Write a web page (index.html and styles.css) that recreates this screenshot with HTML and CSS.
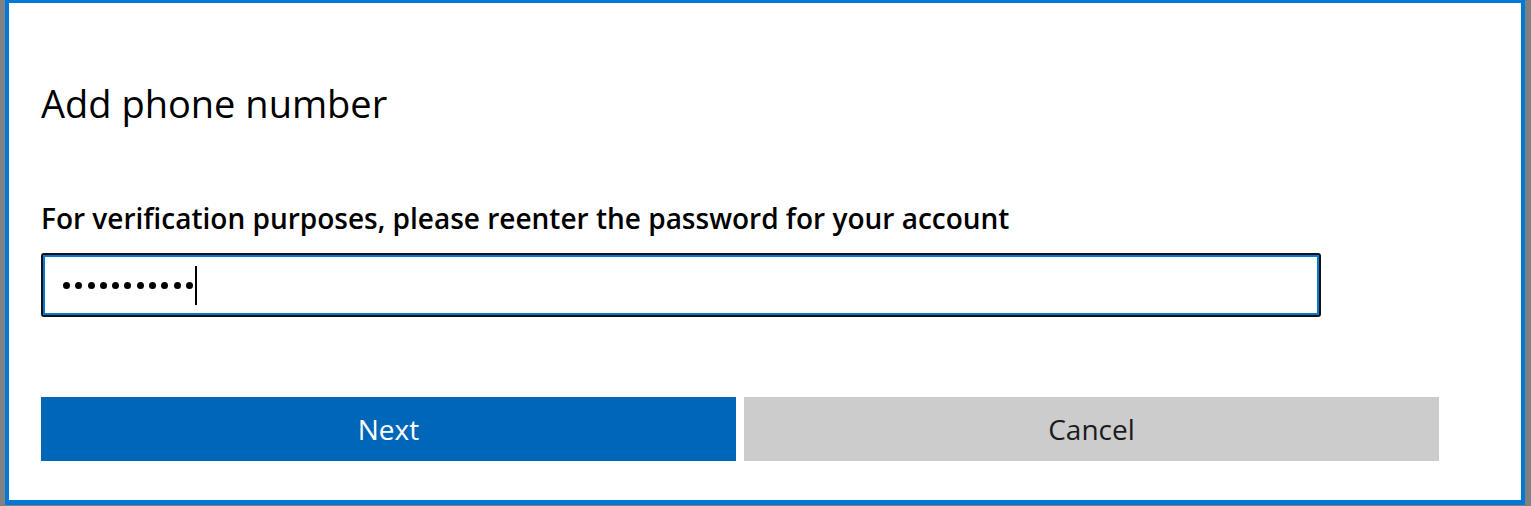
FILE: index.html
```html
<!DOCTYPE html>
<html lang="en">
<head>
<meta charset="utf-8">
<title>Add phone number</title>
<link rel="stylesheet" href="styles.css">
</head>
<body>
<div class="window">
  <div class="content">
    <h1 class="title">Add phone number</h1>
    <label class="label" for="pw">For verification purposes, please reenter the password for your account</label>
    <div class="input" id="pw">
      <div class="dots">
        <span class="dot"></span><span class="dot"></span><span class="dot"></span><span class="dot"></span><span class="dot"></span><span class="dot"></span><span class="dot"></span><span class="dot"></span><span class="dot"></span><span class="dot"></span><span class="dot"></span>
      </div>
      <span class="caret"></span>
    </div>
    <div class="buttons">
      <button class="btn btn-primary">Next</button>
      <button class="btn btn-secondary">Cancel</button>
    </div>
  </div>
</div>
</body>
</html>
```

FILE: styles.css
```css
html, body {
  margin: 0;
  padding: 0;
  height: 100%;
}
body {
  background: #808080;
  font-family: "Open Sans", "Noto Sans", sans-serif;
  color: #000;
  overflow: hidden;
}
.window {
  box-sizing: border-box;
  margin-left: 5px;
  width: 1520px;
  height: 505px;
  background: #fff;
  border-style: solid;
  border-color: #0078d7;
  border-width: 3px 4px 5px 4px;
}
.content {
  padding: 76px 0 0 32px;
  display: flex;
  flex-direction: column;
  align-items: flex-start;
}
.title {
  margin: 0;
  font-size: 38px;
  line-height: 48px;
  font-weight: 400;
}
.label {
  margin-top: 73px;
  font-size: 28px;
  line-height: 36px;
  font-weight: 600;
}
.input {
  box-sizing: border-box;
  margin-top: 17px;
  width: 1280px;
  height: 64px;
  border: 2px solid #111;
  border-radius: 3px;
  box-shadow: inset 0 0 0 2px #0078d7;
  display: flex;
  align-items: center;
  padding-left: 20px;
}
.dots {
  display: flex;
  gap: 5.3px;
}
.dot {
  width: 7px;
  height: 7px;
  border-radius: 50%;
  background: #000;
}
.caret {
  width: 2px;
  height: 39px;
  background: #000;
  margin-left: 2px;
}
.buttons {
  margin-top: 80px;
  display: flex;
  gap: 8px;
}
.btn {
  width: 695px;
  height: 64px;
  border: none;
  padding: 0;
  font-family: inherit;
  font-size: 28px;
  font-weight: 400;
}
.btn-primary {
  background: #0067b8;
  color: #fff;
}
.btn-secondary {
  background: #cccccc;
  color: #1b1b1b;
}
```
